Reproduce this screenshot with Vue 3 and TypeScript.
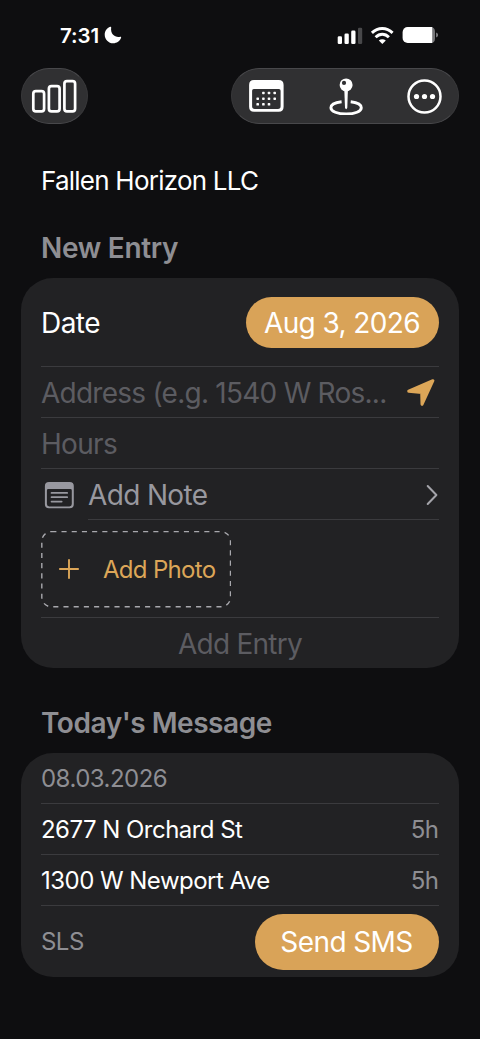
<script setup lang="ts">
interface Visit {
  address: string
  hours: string
}

const company = 'Fallen Horizon LLC'
const visits: Visit[] = [
  { address: '2677 N Orchard St', hours: '5h' },
  { address: '1300 W Newport Ave', hours: '5h' },
]
const calendarDots: [number, number][] = [
  [14.4, 13], [20, 13], [25.7, 13],
  [8.7, 18.7], [14.4, 18.7], [20, 18.7], [25.7, 18.7],
  [8.7, 24.3], [14.4, 24.3], [20, 24.3],
]
</script>

<template>
  <main class="screen">
    <header class="status">
      <div class="clock">
        <span class="time">7:31</span>
        <svg width="18" height="18" viewBox="0 0 18 18">
          <path d="M6.200 .8C3 2 .7 5 .7 8.700C.7 13.400 4.500 17.300 9.200 17.300C12.800 17.300 15.900 15.100 17.100 11.800C17.300 11.100 16.900 10.600 16.200 10.800C11.500 12 6.100 8.300 7.200 1.500C7.300 .9 6.800 .6 6.200 .8Z" fill="#fff" />
        </svg>
      </div>
      <svg class="radios" width="102" height="18" viewBox="337 26 102 18">
        <g fill="#fff">
          <rect x="337.700" y="36.300" width="4.300" height="7.700" rx="1.300" />
          <rect x="344.500" y="33.500" width="4.300" height="10.500" rx="1.300" />
          <rect x="351.200" y="30.600" width="4.300" height="13.400" rx="1.300" />
        </g>
        <rect x="358" y="27.800" width="4.200" height="16.200" rx="1.300" fill="#48484a" />
        <g fill="none" stroke="#fff" stroke-width="2.900">
          <path d="M371.900 32.900C378 27 386.500 27 392.600 32.900" />
          <path d="M375.600 37.200C379.600 33.300 385 33.300 388.900 37.200" />
        </g>
        <path d="M382.300 43.900L378.800 40.600C380.700 38.900 383.800 38.900 385.800 40.600Z" fill="#fff" />
        <path d="M407.500 27H430.500C433.500 27 435 29 435 31.500V38.500C435 41.500 433.500 43.100 430.500 43.100H407.500Z" fill="#77777a" />
        <path d="M407.700 27H432.200V43.100H407.700A5.100 5.100 0 0 1 402.600 38V32.100A5.100 5.100 0 0 1 407.700 27Z" fill="#fff" />
        <path d="M436.200 32.600Q438 33.200 438 35.100Q438 37 436.200 37.600Z" fill="#8b8b8e" />
      </svg>
    </header>

    <nav class="toolbar">
      <button class="glass chart" aria-label="Statistics">
        <svg width="46" height="34" viewBox="31 79 46 34" fill="none" stroke="#fff" stroke-width="2.700">
          <rect x="33.300" y="91.200" width="10.800" height="20.200" rx="2.600" />
          <rect x="48.900" y="86.200" width="10.700" height="25.200" rx="2.600" />
          <rect x="64.400" y="81.100" width="10.700" height="30.300" rx="2.600" />
        </svg>
      </button>
      <div class="glass actions">
        <svg width="35" height="32" viewBox="0 0 35 32">
          <path fill-rule="evenodd" fill="#fff" d="M5 .1H29.700Q34.600 .1 34.600 5V26.700Q34.600 31.700 29.700 31.700H5Q.1 31.700 .1 26.700V5Q.1 .1 5 .1ZM4.800 9Q3.100 9 3.100 10.700V26.200Q3.100 28.900 5.800 28.900H28.900Q31.600 28.900 31.600 26.200V10.700Q31.600 9 29.900 9Z" />
          <rect v-for="([x, y], i) in calendarDots" :key="i" :x="x - 1.300" :y="y - 1.300" width="2.600" height="2.600" rx=".7" fill="#fff" />
        </svg>
        <svg width="34" height="38" viewBox="329 77.500 34 38">
          <path d="M341.600 102.200C334.500 103 330.900 105.300 330.900 108.200C330.900 112 337.600 114.500 346.200 114.500C354.800 114.500 361.300 112 361.300 108.200C361.300 105.300 357.500 103 350.700 102.200" fill="none" stroke="#fff" stroke-width="2.900" />
          <path d="M344.300 90H347.900L347.300 108.300Q346.200 111.200 345 108.300Z" fill="#fff" />
          <circle cx="346.100" cy="85.400" r="6.500" fill="#fff" />
          <circle cx="344" cy="83.400" r="2.100" fill="#303033" />
        </svg>
        <svg width="35" height="35" viewBox="0 0 35 35" fill="#fff">
          <circle cx="17.500" cy="17.500" r="16" fill="none" stroke="#fff" stroke-width="2.500" />
          <circle cx="9.500" cy="17.500" r="2.600" /><circle cx="17.500" cy="17.500" r="2.600" /><circle cx="25.500" cy="17.500" r="2.600" />
        </svg>
      </div>
    </nav>

    <p class="company">{{ company }}</p>

    <h2 class="entry-title">New Entry</h2>
    <section class="card entry">
      <div class="row date-row">
        <span class="date-label">Date</span>
        <button class="pill date-pill">Aug 3, 2026</button>
      </div>
      <div class="row field">
        <span class="address">Address (e.g. 1540 W Ros...</span>
        <svg width="30" height="30" viewBox="406 378 30 30">
          <path d="M432.900 380.700L422 404.300L421.700 392.500L408.700 391.200Z" fill="#dca658" stroke="#dca658" stroke-width="3" stroke-linejoin="round" />
        </svg>
      </div>
      <div class="row field"><span class="hours">Hours</span></div>
      <div class="row note">
        <svg width="30" height="28" viewBox="44 481 30 28">
          <path fill="#98989f" fill-rule="evenodd" d="M49 482H69.700Q73.800 482 73.800 486.100V504.200Q73.800 508.300 69.700 508.300H49Q44.900 508.300 44.900 504.200V486.100Q44.900 482 49 482ZM48.300 489Q46.900 489 46.900 490.400V504Q46.900 506.400 49.300 506.400H69.400Q71.800 506.400 71.800 504V490.400Q71.800 489 70.400 489Z" />
          <path d="M51.500 492.900H67.200M51.500 497.200H67.200M51.500 501.600H61.700" fill="none" stroke="#98989f" stroke-width="1.700" stroke-linecap="round" />
        </svg>
        <span class="note-label">Add Note</span>
        <svg class="chevron" width="14" height="22" viewBox="0 0 14 22">
          <path d="M2.700 2L11.400 11L2.700 20" fill="none" stroke="#a4a4aa" stroke-width="2" stroke-linecap="round" stroke-linejoin="round" />
        </svg>
      </div>
      <div class="row photo-row">
        <button class="photo">
          <svg class="outline" width="190" height="77" viewBox="0 0 190 77">
            <rect x=".8" y=".6" width="188.700" height="75.200" rx="9.500" fill="none" stroke="#a8a8ad" stroke-width="1.400" stroke-dasharray="5.100 5.100" />
          </svg>
          <svg width="20" height="20" viewBox="0 0 20 20">
            <path d="M10 .2V19.800M.2 10H19.800" stroke="#dca658" stroke-width="1.900" />
          </svg>
          <span class="photo-label">Add Photo</span>
        </button>
      </div>
      <div class="row submit"><span class="submit-label">Add Entry</span></div>
    </section>

    <h2 class="message-title">Today's Message</h2>
    <section class="card message">
      <div class="row day"><span class="day-label">08.03.2026</span></div>
      <div v-for="visit in visits" :key="visit.address" class="row visit">
        <span>{{ visit.address }}</span>
        <span class="duration">{{ visit.hours }}</span>
      </div>
      <div class="row send">
        <span class="sls">SLS</span>
        <button class="pill send-pill">Send SMS</button>
      </div>
    </section>
  </main>
</template>

<style>
body {
  margin: 0;
  background: #0e0e10;
}
</style>

<style scoped>
.screen {
  box-sizing: border-box;
  width: 480px;
  height: 1039px;
  padding: 0 21px;
  overflow: hidden;
  background: #0e0e10;
  color: #fff;
  font-family: Inter, "Liberation Sans", sans-serif;
  font-size: 24px;
  letter-spacing: -0.53px;
  white-space: nowrap;
}
button {
  margin: 0;
  padding: 0;
  border: 0;
  background: none;
  color: inherit;
  font: inherit;
  letter-spacing: inherit;
}
svg {
  display: block;
  flex: none;
}
.status {
  display: flex;
  justify-content: space-between;
  height: 68px;
  padding: 26px 20px 0 39px;
  box-sizing: border-box;
}
.clock {
  display: flex;
  height: 18px;
  align-items: center;
  gap: 4px;
}
.time {
  width: 40px;
  font-size: 20.500px;
  font-weight: 600;
  letter-spacing: -0.1px;
}
.toolbar {
  display: flex;
  justify-content: space-between;
  height: 56px;
}
.glass {
  box-sizing: border-box;
  height: 56px;
  border: 1px solid #48484b;
  border-left-color: #38383a;
  border-right-color: #38383a;
  border-radius: 28px;
  background: #303032;
}
.chart {
  width: 67px;
  padding-left: 9px;
}
.actions {
  display: flex;
  width: 228px;
  align-items: center;
  justify-content: space-between;
  padding: 0 16px 0 17px;
}
.company {
  height: 38px;
  margin: 38px 20px 0;
  font-size: 26px;
  letter-spacing: -0.77px;
  line-height: 38px;
}
h2 {
  margin: 0 20px;
  color: #8e8e93;
  font-size: 28px;
  font-weight: 600;
  letter-spacing: -0.3px;
  line-height: 36px;
}
.entry-title {
  padding-top: 30px;
  height: 48px;
}
.card {
  border-radius: 32px;
  background: #222224;
}
.entry {
  height: 390px;
}
.row {
  display: flex;
  box-sizing: border-box;
  height: 51px;
  margin: 0 20px;
  align-items: center;
  justify-content: space-between;
}
.row + .row {
  border-top: 1px solid #3b3b3e;
}
.entry .row {
  padding-top: 2px;
  font-size: 28px;
}
.entry .date-row {
  height: 88px;
}
.pill {
  border-radius: 28px;
  background: #d9a358;
  letter-spacing: -0.6px;
  text-align: center;
}
.date-pill {
  width: 193px;
  height: 51px;
  margin-top: -2px;
  padding: 1px 1px 0 0;
}
.field {
  color: #5c5c61;
}
.address {
  letter-spacing: -0.75px;
}
.hours {
  letter-spacing: -0.7px;
}
.field svg {
  margin-right: 3px;
}
.row.note {
  justify-content: flex-start;
  padding-left: 3px;
  color: #98989f;
}
.note-label {
  margin-left: 14px;
  letter-spacing: -0.65px;
}
.chevron {
  margin-left: auto;
}
.entry .photo-row {
  height: 98px;
  padding-top: 0;
  border-top: 0;
  align-items: flex-start;
  background: linear-gradient(#3b3b3e, #3b3b3e) 47px 0 / 351px 1px no-repeat;
}
.photo {
  display: flex;
  position: relative;
  width: 190px;
  height: 76px;
  margin-top: 12px;
  align-items: center;
  padding-left: 18px;
  gap: 24px;
  box-sizing: border-box;
  color: #dca658;
  font-size: 24px;
  letter-spacing: -0.7px;
}
.outline {
  position: absolute;
  inset: 0;
}
.row.submit {
  justify-content: center;
  color: #5c5c61;
  letter-spacing: -0.75px;
}
.message-title {
  padding-top: 37px;
  height: 48px;
  letter-spacing: -0.45px;
}
.message {
  height: 224px;
}
.day {
  height: 50px;
  color: #8e8e93;
}
.duration,
.sls {
  color: #8e8e93;
}
.duration {
  padding-right: 0.5px;
}
.row.send {
  height: 72px;
}
.send-pill {
  width: 184px;
  height: 56px;
  padding-right: 1px;
  font-size: 28px;
}
</style>
